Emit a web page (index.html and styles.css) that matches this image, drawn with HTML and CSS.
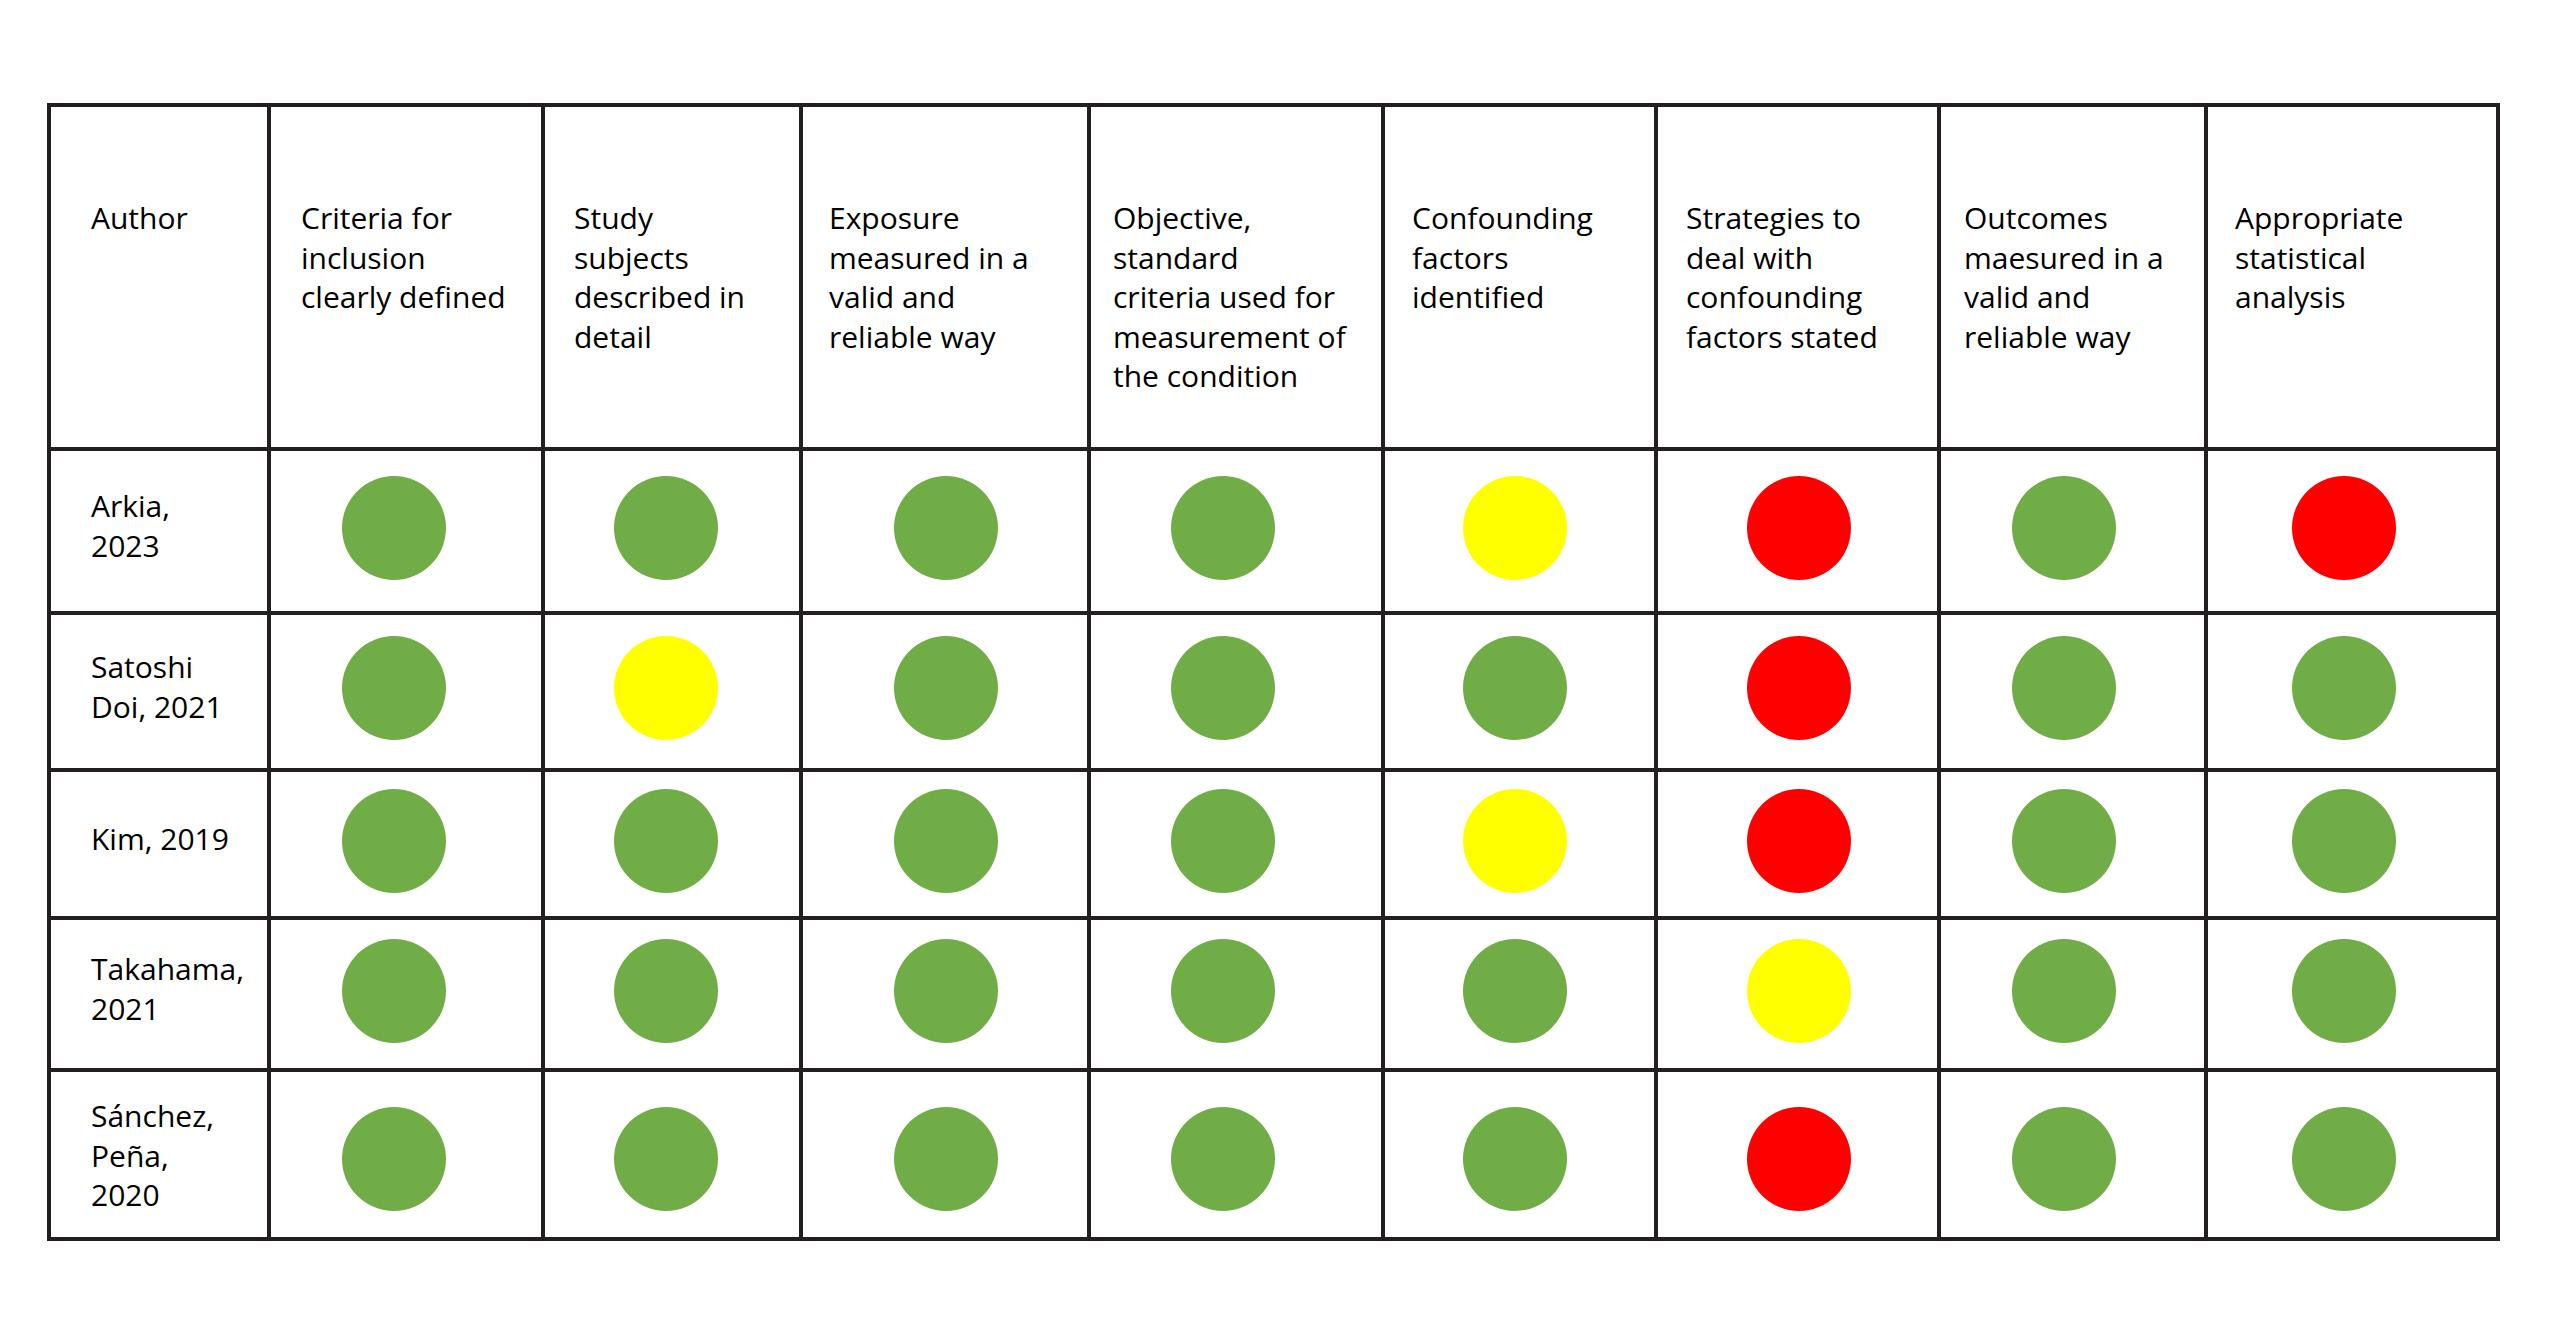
FILE: index.html
```html
<!DOCTYPE html>
<html lang="en">
<head>
<meta charset="utf-8">
<title>Risk of bias assessment</title>
<link rel="stylesheet" href="styles.css">
</head>
<body>
<main class="page">
  <div class="table">
    <div class="cell head">Author</div>
    <div class="cell head">Criteria for<br>inclusion<br>clearly defined</div>
    <div class="cell head">Study<br>subjects<br>described in<br>detail</div>
    <div class="cell head">Exposure<br>measured in a<br>valid and<br>reliable way</div>
    <div class="cell head">Objective,<br>standard<br>criteria used for<br>measurement of<br>the condition</div>
    <div class="cell head">Confounding<br>factors<br>identified</div>
    <div class="cell head">Strategies to<br>deal with<br>confounding<br>factors stated</div>
    <div class="cell head">Outcomes<br>maesured in a<br>valid and<br>reliable way</div>
    <div class="cell head">Appropriate<br>statistical<br>analysis</div>

    <div class="cell name">Arkia,<br>2023</div>
    <div class="cell mark"><span class="dot green"></span></div>
    <div class="cell mark"><span class="dot green"></span></div>
    <div class="cell mark"><span class="dot green"></span></div>
    <div class="cell mark"><span class="dot green"></span></div>
    <div class="cell mark"><span class="dot yellow"></span></div>
    <div class="cell mark"><span class="dot red"></span></div>
    <div class="cell mark"><span class="dot green"></span></div>
    <div class="cell mark"><span class="dot red"></span></div>

    <div class="cell name">Satoshi<br>Doi, 2021</div>
    <div class="cell mark"><span class="dot green"></span></div>
    <div class="cell mark"><span class="dot yellow"></span></div>
    <div class="cell mark"><span class="dot green"></span></div>
    <div class="cell mark"><span class="dot green"></span></div>
    <div class="cell mark"><span class="dot green"></span></div>
    <div class="cell mark"><span class="dot red"></span></div>
    <div class="cell mark"><span class="dot green"></span></div>
    <div class="cell mark"><span class="dot green"></span></div>

    <div class="cell name">Kim, 2019</div>
    <div class="cell mark"><span class="dot green"></span></div>
    <div class="cell mark"><span class="dot green"></span></div>
    <div class="cell mark"><span class="dot green"></span></div>
    <div class="cell mark"><span class="dot green"></span></div>
    <div class="cell mark"><span class="dot yellow"></span></div>
    <div class="cell mark"><span class="dot red"></span></div>
    <div class="cell mark"><span class="dot green"></span></div>
    <div class="cell mark"><span class="dot green"></span></div>

    <div class="cell name">Takahama,<br>2021</div>
    <div class="cell mark"><span class="dot green"></span></div>
    <div class="cell mark"><span class="dot green"></span></div>
    <div class="cell mark"><span class="dot green"></span></div>
    <div class="cell mark"><span class="dot green"></span></div>
    <div class="cell mark"><span class="dot green"></span></div>
    <div class="cell mark"><span class="dot yellow"></span></div>
    <div class="cell mark"><span class="dot green"></span></div>
    <div class="cell mark"><span class="dot green"></span></div>

    <div class="cell name">Sánchez,<br>Peña,<br>2020</div>
    <div class="cell mark"><span class="dot green"></span></div>
    <div class="cell mark"><span class="dot green"></span></div>
    <div class="cell mark"><span class="dot green"></span></div>
    <div class="cell mark"><span class="dot green"></span></div>
    <div class="cell mark"><span class="dot green"></span></div>
    <div class="cell mark"><span class="dot red"></span></div>
    <div class="cell mark"><span class="dot green"></span></div>
    <div class="cell mark"><span class="dot green"></span></div>
  </div>
</main>
</body>
</html>
```

FILE: styles.css
```css
html, body {
  margin: 0;
  padding: 0;
  background: #ffffff;
}

body {
  font-family: "Open Sans", "Noto Sans", sans-serif;
  font-size: 30px;
  line-height: 39.6px;
  color: #000000;
}

.page {
  padding: 103px 0 0 47px;
}

.table {
  display: grid;
  width: max-content;
  grid-template-columns: 216px 270px 254px 284px 290px 269px 279px 263px 288px;
  grid-template-rows: 340px 160px 153px 144px 148px 165px;
  gap: 4px;
  padding: 4px;
  background: #231f20;
}

.cell {
  background: #ffffff;
  white-space: nowrap;
}

.head {
  padding-top: 91px;
  padding-left: 28px;
}

.head:nth-child(1) { padding-left: 40px; }
.head:nth-child(2) { padding-left: 30px; }
.head:nth-child(3) { padding-left: 29px; }
.head:nth-child(4) { padding-left: 26px; }
.head:nth-child(5) { padding-left: 22px; }
.head:nth-child(6) { padding-left: 27px; }
.head:nth-child(7) { padding-left: 28px; }
.head:nth-child(8) { padding-left: 23px; }
.head:nth-child(9) { padding-left: 27px; }

.name {
  display: flex;
  align-items: center;
  padding: 0 0 10px 40px;
}

.mark {
  display: flex;
  align-items: center;
  justify-content: center;
}

.dot {
  display: block;
  width: 104px;
  height: 104px;
  border-radius: 50%;
  margin-bottom: 7px;
}

/* last row sits slightly lower in its cells */
.name:nth-child(46) {
  padding: 2px 0 0 40px;
}

.mark:nth-child(n+47) .dot {
  margin-bottom: 0;
  margin-top: 9px;
}

.mark:nth-child(9n+2) .dot { margin-right: 24px; }
.mark:nth-child(9n+3) .dot { margin-right: 12px; }
.mark:nth-child(9n+4) .dot { margin-left: 2px; }
.mark:nth-child(9n+5) .dot { margin-right: 26px; }
.mark:nth-child(9n+6) .dot { margin-right: 10px; }
.mark:nth-child(9n+7) .dot { margin-left: 2px; }
.mark:nth-child(9n+8) .dot { margin-right: 18px; }
.mark:nth-child(9n+9) .dot { margin-right: 16px; }

.green { background: #70ad47; }
.yellow { background: #ffff00; }
.red { background: #ff0000; }
```
